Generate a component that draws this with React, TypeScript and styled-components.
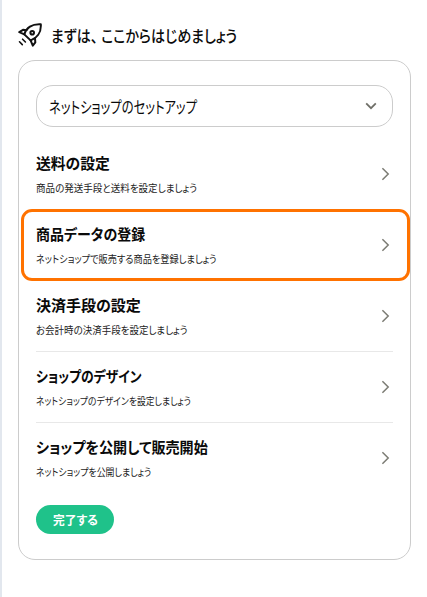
import React, { useLayoutEffect, useRef } from "react";
import styled, { createGlobalStyle } from "styled-components";

const GlobalStyle = createGlobalStyle`
  *, *::before, *::after { box-sizing: border-box; }
  body {
    margin: 0;
    background: #fff;
    color: #0a0a0a;
    font-family: "Noto Sans CJK JP", sans-serif;
    font-feature-settings: "palt";
  }
  h1, h2, p, ul { margin: 0; padding: 0; }
`;

const Page = styled.main`
  height: 597px;
  border-left: 2px solid #e2e7ee;
  padding: 18px 16px 0;
  overflow: hidden;
`;

const Header = styled.header`
  display: flex;
  align-items: center;
  gap: 9px;
  height: 34px;
`;

const Title = styled.h1`
  font-size: 16px;
  line-height: 24px;
  font-weight: 500;
`;

const Comma = styled.span`
  letter-spacing: 4px;
`;

const Card = styled.section`
  margin-top: 8px;
  width: 393px;
  height: 500px;
  padding: 24px 17px 0;
  border: 1px solid #cccccc;
  border-radius: 17px;
`;

const Select = styled.button`
  display: flex;
  align-items: center;
  justify-content: space-between;
  width: 100%;
  height: 42px;
  padding: 0 15px 0 12px;
  border: 1px solid #cccccc;
  border-radius: 17px;
  background: #fff;
  color: inherit;
  font: inherit;
  font-size: 16px;
  line-height: 24px;
  font-feature-settings: inherit;
`;

const List = styled.ul`
  margin-top: 12px;
  list-style: none;
`;

const Item = styled.li<{ $active?: boolean }>`
  position: relative;
  display: flex;
  align-items: center;
  justify-content: space-between;
  height: 71px;
  padding-right: 3px;
  border-bottom: 1px solid #e8e8e8;
  &:last-child { border-bottom-color: transparent; }
  ${({ $active }) =>
    $active &&
    `&::after {
      content: "";
      position: absolute;
      inset: -1px -17px -1px -15px;
      border: 3px solid #ff7200;
      border-radius: 11px;
    }`}
`;

const ItemTitle = styled.h2`
  margin-top: -1px;
  font-size: 15px;
  line-height: 22px;
  font-weight: 700;
`;

const ItemNote = styled.p`
  margin-top: 6px;
  font-size: 10.3px;
  line-height: 16px;
  color: #1c1c1c;
`;

const Done = styled.button`
  display: flex;
  align-items: center;
  justify-content: center;
  margin-top: 11px;
  width: 78px;
  height: 29px;
  padding: 0;
  border: 0;
  border-radius: 15px;
  background: #1fc28a;
  color: #fff;
  font: inherit;
  font-size: 12px;
  font-weight: 700;
  font-feature-settings: inherit;
`;

const Line = styled.span<{ $width: number }>`
  display: block;
  width: ${({ $width }) => $width}px;
  white-space: nowrap;
`;

const Glyphs = styled.span`
  display: inline-block;
  transform-origin: 0 50%;
`;

/** Condenses a line of text horizontally to the given width. */
function Fit({ width, children }: { width: number; children: React.ReactNode }) {
  const ref = useRef<HTMLSpanElement>(null);
  useLayoutEffect(() => {
    const el = ref.current;
    if (el) el.style.transform = `scaleX(${width / el.offsetWidth})`;
  }, [width, children]);
  return (
    <Line $width={width}>
      <Glyphs ref={ref}>{children}</Glyphs>
    </Line>
  );
}

const Rocket = () => (
  <svg width="24" height="24" viewBox="0 0 24 24" fill="none" stroke="#111" strokeWidth="2" strokeLinejoin="round" strokeLinecap="round">
    <path d="M6.3 11.4C8.2 5 14 .6 22.8 1.2C23.4 9.6 18.6 15.2 12.6 17.4Z" />
    <path d="M8.6 7.2L5 6.8L1.3 9.2L6.3 11.4M12.6 17.4L14.8 22.6L17.3 19.4L17 15.2" />
    <circle cx="14.2" cy="9.8" r="1.8" />
    <path d="M4.6 16.2L7.4 19M1.5 18.8L4.3 21.6" strokeWidth="1.6" />
  </svg>
);

const ChevronDown = () => (
  <svg width="12" height="8" viewBox="0 0 12 8" fill="none" stroke="#6f6f68" strokeWidth="1.8">
    <path d="M1.2 1.4L6 6.2L10.8 1.4" />
  </svg>
);

const ChevronRight = () => (
  <svg width="9" height="14" viewBox="0 0 9 14" fill="none" stroke="#7c7c74" strokeWidth="1.5">
    <path d="M1.4 1.2L7.2 7L1.4 12.8" />
  </svg>
);

const steps = [
  { title: "送料の設定", tw: 74, note: "商品の発送手段と送料を設定しましょう", nw: 161 },
  { title: "商品データの登録", tw: 109, note: "ネットショップで販売する商品を登録しましょう", nw: 181, active: true },
  { title: "決済手段の設定", tw: 105, note: "お会計時の決済手段を設定しましょう", nw: 152 },
  { title: "ショップのデザイン", tw: 106, note: "ネットショップのデザインを設定しましょう", nw: 155 },
  { title: "ショップを公開して販売開始", tw: 172, note: "ネットショップを公開しましょう", nw: 115 },
];

export default function App() {
  return (
    <>
      <GlobalStyle />
      <Page>
        <Header>
          <Rocket />
          <Title>
            <Fit width={186}>まずは<Comma>、</Comma>ここからはじめましょう</Fit>
          </Title>
        </Header>
        <Card>
          <Select>
            <Fit width={148}>ネットショップのセットアップ</Fit>
            <ChevronDown />
          </Select>
          <List>
            {steps.map((s) => (
              <Item key={s.title} $active={s.active}>
                <div>
                  <ItemTitle><Fit width={s.tw}>{s.title}</Fit></ItemTitle>
                  <ItemNote><Fit width={s.nw}>{s.note}</Fit></ItemNote>
                </div>
                <ChevronRight />
              </Item>
            ))}
          </List>
          <Done><Fit width={45}>完了する</Fit></Done>
        </Card>
      </Page>
    </>
  );
}
